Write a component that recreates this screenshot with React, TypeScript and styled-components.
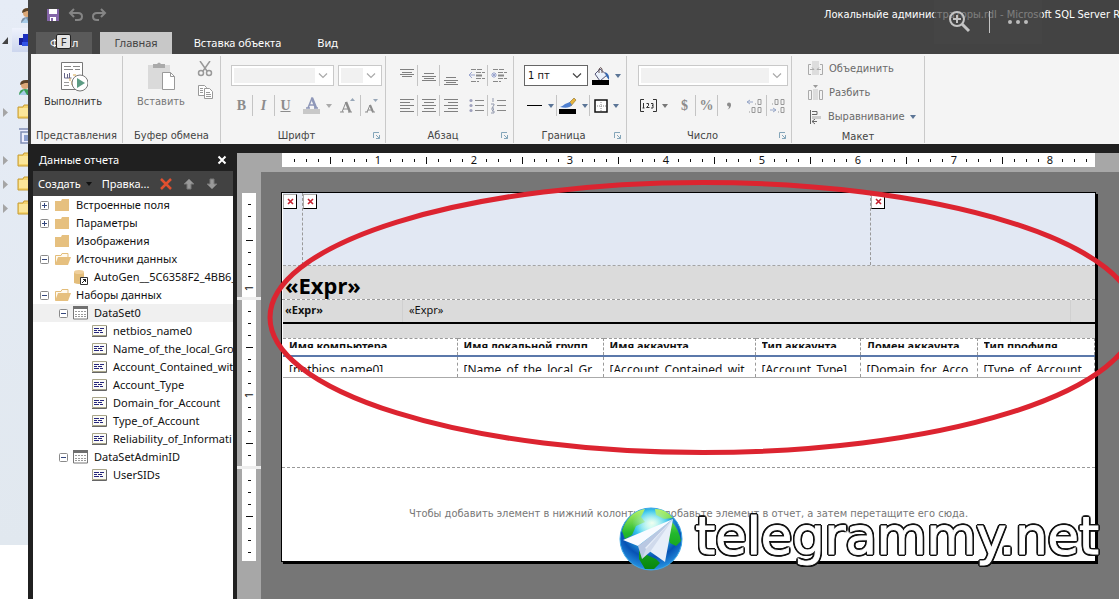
import React from "react";
import styled, { createGlobalStyle, css } from "styled-components";

const GlobalStyle = createGlobalStyle`
  * { box-sizing: border-box; }
  body {
    margin: 0;
    overflow: hidden;
    background: #fff;
    color: #111;
    font: 11px/18px "Noto Sans", "Open Sans", sans-serif;
  }
  button, select { font: inherit; color: inherit; }
  button { padding: 0; border: 0; background: none; }
`;

const narrowFont = `"DejaVu Sans Condensed", "DejaVu Sans", sans-serif`;

/* ---------- shell ---------- */

const Screen = styled.div`
  position: relative;
  display: flex;
  min-height: 100vh;
  overflow: hidden;
`;

const ConsoleTree = styled.aside`
  flex: none;
  width: 28px;
  height: 545px;
  padding-top: 4px;
  background: linear-gradient(#e6ecf6, #e1e8ef);
  overflow: hidden;
`;

const ConsoleRow = styled.div<{ $selected?: boolean }>`
  display: flex;
  align-items: center;
  gap: 8px;
  height: 24px;
  padding-left: 2px;
  svg { flex: none; }
  ${(p) =>
    p.$selected &&
    css`
      background: linear-gradient(#eef2fc, #ccd6ee) 12px 0 / 30px 24px no-repeat;
    `}
`;

const AppWindow = styled.div`
  display: flex;
  flex: 1;
  flex-direction: column;
  min-width: 0;
  background: #202020;
`;

/* ---------- title and tabs ---------- */

const TitleBar = styled.header`
  display: flex;
  align-items: center;
  justify-content: space-between;
  height: 30px;
  padding-left: 17px;
  background: #434343;
`;

const QuickAccess = styled.div`
  display: flex;
  gap: 7px;
  button { display: flex; }
`;

const Title = styled.h1`
  width: 295px;
  margin: 0;
  overflow: hidden;
  color: #fff;
  font: 400 11px/18px ${narrowFont};
  white-space: nowrap;
`;

const ViewerTools = styled.div`
  position: absolute;
  top: 0;
  right: 77px;
  display: flex;
  align-items: center;
  justify-content: space-between;
  width: 108px;
  height: 44px;
  padding: 0 13px;
  background: rgba(70, 70, 70, 0.7);
  button { display: flex; }
`;

const ViewerRule = styled.span`
  width: 1px;
  height: 22px;
  background: #c4c4c4;
`;

const TabBar = styled.nav`
  display: flex;
  gap: 8px;
  height: 24px;
  padding: 2px 8px 0;
  background: #434343;
`;

const Tab = styled.button<{ $kind?: "file" | "active" }>`
  position: relative;
  height: 22px;
  padding: 0 14px;
  color: ${(p) => (p.$kind === "active" ? "#444" : "#fff")};
  background: ${(p) => (p.$kind === "active" ? "#c8c8c8" : p.$kind === "file" ? "#5a5a5a" : "none")};
`;

const KeyTip = styled.kbd`
  position: absolute;
  top: 2px;
  left: 20px;
  width: 15px;
  height: 15px;
  border: 1px solid #222;
  border-radius: 2px;
  background: #e4e4e4;
  color: #333;
  font: 11px/13px "Noto Sans", sans-serif;
  text-align: center;
`;

/* ---------- ribbon ---------- */

const Ribbon = styled.div`
  display: flex;
  height: 90px;
  padding: 2px 0 1px;
  border-left: 3px solid #434343;
  background: #f4f4f4;
  font-family: ${narrowFont};
`;

const GroupBox = styled.section<{ $width: number }>`
  display: flex;
  flex: none;
  flex-direction: column;
  justify-content: space-between;
  width: ${(p) => p.$width}px;
  border-right: 1px solid #c9c9c9;
`;

const GroupBody = styled.div<{ $pad: number; $top: number }>`
  display: flex;
  flex-direction: column;
  gap: 9px;
  padding: ${(p) => p.$top}px 0 0 ${(p) => p.$pad}px;
`;

const GroupFooter = styled.div<{ $launch?: boolean }>`
  display: flex;
  align-items: center;
  height: 15px;
  padding: 0 ${(p) => (p.$launch ? 4 : 0)}px 0 0;
  color: #444;
  span { flex: 1; text-align: center; white-space: nowrap; }
  button { display: flex; opacity: 0.6; }
`;

const ToolRow = styled.div`
  display: flex;
  align-items: center;
  height: 21px;
`;

const Spacer = styled.span<{ $width: number }>`
  flex: none;
  width: ${(p) => p.$width}px;
`;

const Tool = styled.button<{ $width?: number; $divided?: boolean }>`
  display: flex;
  flex: none;
  align-items: center;
  justify-content: center;
  gap: 5px;
  width: ${(p) => p.$width ?? 22}px;
  height: 21px;
  border-right: 1px solid ${(p) => (p.$divided ? "#c4c4c4" : "transparent")};
  color: #8c8c8c;
  font: bold 14px/20px "Liberation Serif", serif;
`;

const ComboFrame = styled.label<{ $width: number; $live?: boolean }>`
  display: flex;
  flex: none;
  align-items: center;
  width: ${(p) => p.$width}px;
  height: 21px;
  padding: 2px;
  border: 1px solid ${(p) => (p.$live ? "#666" : "#c9c9c9")};
  background: #fff;
  select {
    flex: 1;
    min-width: 0;
    height: 15px;
    padding: 0 1px;
    border: 0;
    appearance: none;
    background: ${(p) => (p.$live ? "#fff" : "#f1f1f1")};
    color: #111;
    line-height: 15px;
    opacity: 1;
  }
  svg { flex: none; margin: 0 3px; }
`;

const BigTool = styled.button<{ $muted?: boolean }>`
  display: flex;
  flex-direction: column;
  align-items: center;
  color: ${(p) => (p.$muted ? "#777" : "#333")};
  line-height: 18px;
  svg { margin-bottom: 1px; }
`;

const ClipRow = styled.div`
  display: flex;
  padding-left: 14px;
  gap: 12px;
`;

const RunRow = styled.div`
  display: flex;
  justify-content: center;
  padding-right: 7px;
`;

const ClipColumn = styled.div`
  display: flex;
  flex-direction: column;
  gap: 7px;
  button { display: flex; }
`;

const LayoutList = styled.div`
  display: flex;
  flex-direction: column;
  padding: 1px 0 0 15px;
`;

const LayoutTool = styled.button`
  display: flex;
  align-items: center;
  gap: 5px;
  height: 24px;
  color: #6a6a6a;
`;

/* ---------- report data pane ---------- */

const Workspace = styled.main`
  display: flex;
  flex: 1;
  min-height: 0;
`;

const DataPane = styled.section`
  display: flex;
  flex: none;
  flex-direction: column;
  width: 209px;
  padding: 4px 4px 0 5px;
`;

const PaneHeader = styled.div`
  display: flex;
  align-items: center;
  justify-content: space-between;
  height: 23px;
  padding: 0 6px;
  color: #fff;
  h2 { margin: 0; font-size: 11px; font-weight: 400; }
  button { display: flex; }
`;

const PaneToolbar = styled.div`
  display: flex;
  align-items: center;
  gap: 10px;
  height: 25px;
  padding-left: 5px;
  background: #424242;
  color: #fff;
  button { display: flex; align-items: center; gap: 5px; }
`;

const Tree = styled.ul`
  flex: 1;
  margin: 0;
  padding: 0;
  overflow: hidden;
  background: #fff;
  list-style: none;
`;

const TreeRow = styled.li<{ $level: number; $selected?: boolean }>`
  display: flex;
  align-items: center;
  height: 18px;
  padding-left: ${(p) => 7 + p.$level * 19}px;
  background: ${(p) => (p.$selected ? "#f0f0f0" : "none")};
  white-space: nowrap;
  svg { flex: none; margin-right: 5px; }
`;

const Expander = styled.button`
  display: flex;
  flex: none;
  width: 14px;
  svg { margin: 1px 0 0; }
`;

/* ---------- report designer ---------- */

const Designer = styled.section`
  display: flex;
  flex: 1;
  flex-direction: column;
  min-width: 0;
  margin-top: 9px;
  background: #a7a7a7;
`;

const TopRuler = styled.div`
  display: flex;
  height: 14px;
  margin: 0 24px 5px 45px;
  padding-left: 6px;
  overflow: hidden;
  background: #fff;
`;

const Tick = styled.span<{ $long?: boolean; $vertical?: boolean }>`
  display: flex;
  flex: none;
  align-items: center;
  justify-content: center;
  width: ${(p) => (p.$vertical ? 14 : 12)}px;
  height: ${(p) => (p.$vertical ? 12 : 14)}px;
  line-height: 14px;
  writing-mode: ${(p) => (p.$vertical ? "sideways-lr" : "horizontal-tb")};
  i {
    width: ${(p) => (p.$vertical ? (p.$long ? 7 : 3) : 1)}px;
    height: ${(p) => (p.$vertical ? 1 : p.$long ? 7 : 3)}px;
    background: #111;
  }
`;

const DesignerBody = styled.div`
  display: flex;
  flex: 1;
`;

const SideRuler = styled.div`
  display: flex;
  flex: none;
  flex-direction: column;
  width: 24px;
  padding-top: 21px;
`;

const SideSection = styled.div<{ $height: number }>`
  height: ${(p) => p.$height}px;
  margin: 0 5px;
  padding-top: 5px;
  overflow: hidden;
  background: #fff;
`;

const SideDivider = styled.div`
  height: 3px;
  background: #eee;
`;

const Canvas = styled.div`
  flex: 1;
  min-width: 0;
  padding: 20px 23px 20px 20px;
  background: #767676;
`;

const Paper = styled.article`
  border: 1px solid #000;
  box-shadow: 2px 2px 0 #000;
  background: #fff;
`;

const ReportHeader = styled.div`
  height: 106px;
  padding-left: 1px;
`;

const ImageRow = styled.div`
  display: grid;
  grid-template-columns: 19px 1fr 225px;
  height: 73px;
  border-bottom: 1px dashed #a4a4a4;
  background: #e2e8f3;
`;

const ImageCell = styled.div`
  padding-top: 1px;
  & + & { border-left: 1px dashed #999; }
`;

const BrokenImage = styled.span`
  display: flex;
  align-items: center;
  justify-content: center;
  width: 14px;
  height: 15px;
  border: 1px solid #aaa;
  border-right-color: #000;
  border-bottom-color: #000;
  background: #fff;
`;

const ReportTitle = styled.h3`
  height: 33px;
  margin: 0;
  padding: 5px 2px 0;
  background: #dbdbdb;
  color: #000;
  font-size: 22px;
  line-height: 28px;
`;

const ReportBody = styled.div`
  height: 168px;
  padding-left: 1px;
  border-top: 1px dashed #999;
`;

const ExprRow = styled.div`
  display: grid;
  grid-template-columns: 119px 1fr 25px;
  height: 24px;
  border-bottom: 2px solid #000;
  background: #dbdbdb;
  line-height: 20px;
  b { padding-left: 2px; }
  span { padding-left: 6px; border-left: 1px solid #d0d0d0; }
`;

const BlankRow = styled.div`
  height: 14px;
  background: #dbdbdb;
`;

const ReportTable = styled.table`
  width: 100%;
  table-layout: fixed;
  border-collapse: collapse;
  th, td {
    padding: 0 6px;
    border: 0 dashed #999;
    border-width: 1px 1px 0 0;
    text-align: left;
    vertical-align: top;
    white-space: nowrap;
  }
  th { height: 17px; border-bottom: 2px solid #5b78aa; }
  td { height: 22px; border-bottom: 1px solid #aaa; }
`;

const CellText = styled.div<{ $data?: boolean }>`
  height: ${(p) => (p.$data ? 15 : 9)}px;
  padding-top: ${(p) => (p.$data ? 5 : 0)}px;
  overflow: hidden;
  font-size: ${(p) => (p.$data ? 12 : 11)}px;
  line-height: ${(p) => (p.$data ? 15 : 13)}px;
`;

const ReportFooter = styled.footer`
  height: 94px;
  padding-top: 37px;
  border-top: 1px dashed #999;
  color: #777;
  font-family: ${narrowFont};
  text-align: center;
  white-space: nowrap;
`;

const Annotation = styled.svg`
  position: absolute;
  top: 0;
  left: 0;
  pointer-events: none;
`;

const Watermark = styled.div`
  position: absolute;
  top: 507px;
  right: 20px;
  display: flex;
  align-items: flex-start;
  gap: 12px;
  color: #fff;
  font: 51px/60px "DejaVu Sans", sans-serif;
  -webkit-text-stroke: 1px #fff;
  text-shadow:
    2px 0 #111, -2px 0 #111, 0 2px #111, 0 -2px #111,
    2px 1px #111, -2px 1px #111, 2px -1px #111, -2px -1px #111,
    1px 2px #111, -1px 2px #111, 1px -2px #111, -1px -2px #111;
`;

/* ---------- icons ---------- */

const Caret = ({ color = "#5b7596" }: { color?: string }) => (
  <svg width="6" height="4"><path d="M0 0h6L3 4z" fill={color} /></svg>
);

const Chevron = ({ color }: { color: string }) => (
  <svg width="10" height="6"><path d="M1 .5l4 4 4-4" fill="none" stroke={color} strokeWidth="1.2" /></svg>
);

const Lines = ({ rows, color = "#808080" }: { rows: [number, number, number][]; color?: string }) => (
  <svg width="16" height="18" shapeRendering="crispEdges">
    {rows.map(([x, y, w], i) => <rect key={i} x={x} y={y} width={w} height="1" fill={color} />)}
  </svg>
);

const Indent = ({ back }: { back?: boolean }) => (
  <svg width="18" height="16">
    <path d="M3 1.500h12M8 4.500h9M8 10.500h9M3 13.500h8" stroke="#888" strokeDasharray="5 1" />
    <path d="M8 7.500h6" stroke="#888" strokeWidth="2" />
    <path d={back ? "M1 7h6M4 4v6M2 5l4 4M6 5l-4 4" : "M1 7h6M4 4L1 7l3 3"} stroke="#9aa5cf" fill="none" />
  </svg>
);

const ListIcon = ({ numbered }: { numbered?: boolean }) => (
  <svg width="16" height="16">
    <path d="M6 2.500h9M6 7.500h9M6 12.500h9" stroke="#888" />
    {numbered
      ? <path d="M2 0v4M0 6h3v1L1 10h2M0 11h3L1 13h2v2H0" fill="none" stroke="#9299ad" />
      : [2.5, 7.5, 12.5].map((y) => <circle key={y} cx="2" cy={y} r="1.600" fill="#9fa2bd" />)}
  </svg>
);

const Launcher = () => (
  <svg width="9" height="9" fill="none" stroke="#3b7292">
    <path d="M1.500 7V1.500H7" /><path d="M4 4l3.500 3.500M7.500 4v3.500H4" />
  </svg>
);

const FolderIcon = ({ open }: { open?: boolean }) => (
  <svg width="17" height="14">
    {open ? (
      <>
        <path d="M1.500 12V3.500H7l1-2h6V5" fill="#fffaf0" stroke="#e3bd7a" />
        <path d="M4 5h13l-3 8H1z" fill="#e6c07f" />
      </>
    ) : (
      <path d="M1 3h6l1-2h7v12H1z" fill="#e6c07f" />
    )}
  </svg>
);

const DatabaseIcon = () => (
  <svg width="16" height="17">
    <path d="M1 3v11q5 2 10 0V3" fill="#e3bd7a" />
    <ellipse cx="6" cy="3" rx="5" ry="2" fill="#efcf9b" />
    <path d="M7.500 8.500h7v7h-7z" fill="#fff" stroke="#333" />
    <path d="M9 14l4-4M10 10.500h2.500V13" fill="none" stroke="#222" />
  </svg>
);

const DataSetIcon = () => (
  <svg width="16" height="14">
    <path d="M.5 1h14v12H.5z" fill="#fff" stroke="#777" />
    <path d="M0 0h15v3H0z" fill="#707070" />
    <path d="M2 5.500h11M2 8.500h11M2 10.500h11" stroke="#999" strokeDasharray="2 1" />
  </svg>
);

const FieldIcon = () => (
  <svg width="16" height="12">
    <path d="M.5.5h14v10H.5z" fill="#fbfbf6" stroke="#a9a58a" />
    <path d="M14.500 1v10.500H0" fill="none" stroke="#666" />
    <path d="M2 3.500h5M8 3.500h4M2 5.500h3M6 5.500h4M2 7.500h5M8 7.500h3" stroke="#26267c" />
  </svg>
);

const BoxToggle = ({ open }: { open?: boolean }) => (
  <svg width="9" height="9">
    <rect x=".5" y=".5" width="8" height="8" rx="1" fill="#fff" stroke="#8a8a8a" />
    <path d={open ? "M2 4.500h5" : "M2 4.500h5M4.500 2v5"} stroke="#34477d" />
  </svg>
);

const RedCross = () => (
  <svg width="7" height="7"><path d="M1 1l5 5M6 1L1 6" stroke="#c3202f" strokeWidth="1.600" /></svg>
);

const ArrowIcon = ({ down }: { down?: boolean }) => (
  <svg width="13" height="12">
    <path d={down ? "M6 11l5-5H8V1H4v5H1z" : "M6 1l5 5H8v5H4V6H1z"} fill="#999" stroke="#777" />
  </svg>
);

const SideFolder = () => (
  <svg width="18" height="16">
    <path d="M2 3h5l1-2h10v11l-3 2H2z" fill="#f4d36d" stroke="#c79c32" />
    <path d="M3 4h13v8H3z" fill="#fbe69a" />
  </svg>
);

const SideArrow = () => <svg width="6" height="9"><path d="M1 0l5 4.500L1 9z" fill="#a5a5a5" /></svg>;

const PersonIcon = ({ badge }: { badge?: boolean }) => (
  <svg width="16" height="18">
    <path d="M1 16q0-6 6-6t8 6z" fill={badge ? "#3b9f57" : "#7b8fa5"} />
    <circle cx="7" cy="6" r="4" fill="#dba878" />
    <path d="M2 6q0-5 6-5t4 3L7 4z" fill="#5c4327" />
    <path d="M1 16l5-5 3 5z" fill="#a6cbe8" />
  </svg>
);

const Globe = () => (
  <svg width="64" height="64" viewBox="0 0 64 64">
    <defs>
      <radialGradient id="sea" cx="50%" cy="30%" r="70%">
        <stop offset="0" stopColor="#d6fff7" />
        <stop offset=".35" stopColor="#35c4ee" />
        <stop offset=".7" stopColor="#0752b4" />
        <stop offset="1" stopColor="#2795e3" />
      </radialGradient>
      <linearGradient id="land" x1="0" y1="0" x2="0" y2="1">
        <stop offset="0" stopColor="#baf36a" />
        <stop offset=".4" stopColor="#23b92d" />
        <stop offset="1" stopColor="#08860d" />
      </linearGradient>
      <radialGradient id="glow" cx="50%" cy="50%" r="50%">
        <stop offset="0" stopColor="#f2fff0" />
        <stop offset="1" stopColor="#9af2f0" stopOpacity="0" />
      </radialGradient>
    </defs>
    <circle cx="32" cy="32" r="31" fill="url(#sea)" stroke="#3ba8e6" />
    <path d="M3 24Q9 5 26 2l-4 8 4 5-9 4-4 9-7 4zM36 2q11 0 18 9l-9 1-8-4zM52 14q8 8 10 20l-5 5-6-3-2-8zM20 43l8 5 9 4 4 4-6 6h-9l-6-10z" fill="url(#land)" />
    <ellipse cx="33" cy="16" rx="20" ry="14" fill="url(#glow)" />
    <path d="M54 12L4 33l15 6z" fill="#f9fbff" />
    <path d="M54 12L19 39l4 13 6-9z" fill="#b9c8e2" />
    <path d="M54 12L26 41l20 14z" fill="#e7eef9" />
    <path d="M54 12L27 42l-4 10 8-7z" fill="#d0daec" />
  </svg>
);

/* ---------- data ---------- */

type Node = {
  text: string;
  icon: React.ReactNode;
  level: number;
  toggle?: "open" | "closed" | "blank";
  selected?: boolean;
};

const nodes: Node[] = [
  { text: "Встроенные поля", icon: <FolderIcon />, level: 0, toggle: "closed" },
  { text: "Параметры", icon: <FolderIcon />, level: 0, toggle: "closed" },
  { text: "Изображения", icon: <FolderIcon />, level: 0, toggle: "blank" },
  { text: "Источники данных", icon: <FolderIcon open />, level: 0, toggle: "open" },
  { text: "AutoGen__5C6358F2_4BB6_", icon: <DatabaseIcon />, level: 1, toggle: "blank" },
  { text: "Наборы данных", icon: <FolderIcon open />, level: 0, toggle: "open" },
  { text: "DataSet0", icon: <DataSetIcon />, level: 1, toggle: "open", selected: true },
  ...[
    "netbios_name0",
    "Name_of_the_local_Gro",
    "Account_Contained_wit",
    "Account_Type",
    "Domain_for_Account",
    "Type_of_Account",
    "Reliability_of_Informati",
  ].map((text): Node => ({ text, icon: <FieldIcon />, level: 2, toggle: "blank" })),
  { text: "DataSetAdminID", icon: <DataSetIcon />, level: 1, toggle: "open" },
  { text: "UserSIDs", icon: <FieldIcon />, level: 2, toggle: "blank" },
];

const columns: { head: string; field: string; width?: number }[] = [
  { head: "Имя компьютера", field: "[netbios_name0]", width: 174 },
  { head: "Имя локальной групп", field: "[Name_of_the_local_Gr", width: 146 },
  { head: "Имя аккаунта", field: "[Account_Contained_wit", width: 152 },
  { head: "Тип аккаунта", field: "[Account_Type]", width: 105 },
  { head: "Домен аккаунта", field: "[Domain_for_Acco", width: 117 },
  { head: "Тип профиля", field: "[Type_of_Account" },
];

/* ---------- pieces ---------- */

const Group = ({ title, width, pad = 0, top = 9, launch, children }: {
  title: string; width: number; pad?: number; top?: number; launch?: boolean; children: React.ReactNode;
}) => (
  <GroupBox $width={width} aria-label={title}>
    <GroupBody $pad={pad} $top={top}>{children}</GroupBody>
    <GroupFooter $launch={launch}>
      <span>{title}</span>
      {launch && <button aria-label={title + ": параметры"}><Launcher /></button>}
    </GroupFooter>
  </GroupBox>
);

const Combo = ({ label, width, value }: { label: string; width: number; value?: string }) => (
  <ComboFrame $width={width} $live={!!value}>
    <select aria-label={label} disabled={!value}>{value && <option>{value}</option>}</select>
    <Chevron color={value ? "#444" : "#aaa"} />
  </ComboFrame>
);

const ticks = (count: number, vertical?: boolean) =>
  Array.from({ length: count }, (_, k) => {
    const n = k + 1;
    return (
      <Tick key={n} $long={n % 8 === 4} $vertical={vertical}>
        {n % 8 === 0 ? n / 8 : <i />}
      </Tick>
    );
  });

const left: [number, number, number][] = [[1, 2, 14], [1, 5, 10], [1, 8, 14], [1, 11, 10], [1, 14, 14]];

export default function App() {
  return (
    <Screen>
      <GlobalStyle />
      <ConsoleTree>
        <ConsoleRow><Spacer $width={10} /><PersonIcon /></ConsoleRow>
        <ConsoleRow $selected>
          <svg width="6" height="7"><path d="M6 0v7H0z" fill="#444" /></svg>
          <svg width="18" height="16"><path d="M7 2h8v7H7zM5 8h9v5H5z" fill="#1b2fc0" /><path d="M3 6h4v7H3z" fill="#16209c" /><path d="M6 10h7v4H6z" fill="#3153e6" /></svg>
        </ConsoleRow>
        <ConsoleRow />
        <ConsoleRow><Spacer $width={8} /><PersonIcon badge /></ConsoleRow>
        <ConsoleRow><SideArrow /><SideFolder /></ConsoleRow>
        <ConsoleRow>
          <Spacer $width={8} />
          <svg width="14" height="16"><path d="M1 1h13v3H3v11h11" fill="#eef" stroke="#7f8db5" strokeWidth="1.500" /><path d="M6 7h8v6H6z" fill="#8c9fce" /></svg>
        </ConsoleRow>
        <ConsoleRow><SideArrow /><SideFolder /></ConsoleRow>
        <ConsoleRow><SideArrow /><SideFolder /></ConsoleRow>
        <ConsoleRow><SideArrow /><SideFolder /></ConsoleRow>
      </ConsoleTree>

      <AppWindow>
        <TitleBar>
          <QuickAccess>
            <button aria-label="Сохранить">
              <svg width="16" height="14"><path d="M2 1h12v12H2z" fill="#8465a8" /><path d="M4 1h8v5H4zM5 9h6v4H5z" fill="#fff" /><path d="M6 10h2v3H6z" fill="#8465a8" /></svg>
            </button>
            <button aria-label="Отменить">
              <svg width="16" height="14" fill="none" stroke="#858585" strokeWidth="2"><path d="M6 1L2 5l4 4M2 5h8q4 0 4 3.500T10 12H7" /></svg>
            </button>
            <button aria-label="Повторить">
              <svg width="16" height="14" fill="none" stroke="#858585" strokeWidth="2"><path d="M10 1l4 4-4 4M14 5H6Q2 5 2 8.500T6 12h2" /></svg>
            </button>
          </QuickAccess>
          <Title>Локальныйе администраторы.rdl - Microsoft SQL Server R</Title>
        </TitleBar>
        <TabBar>
          <Tab $kind="file">Файл<KeyTip>F</KeyTip></Tab>
          <Tab $kind="active">Главная</Tab>
          <Tab>Вставка объекта</Tab>
          <Tab>Вид</Tab>
        </TabBar>

        <Ribbon>
          <Group title="Представления" width={92} top={5}>
            <RunRow>
              <BigTool>
                <svg width="30" height="31" fill="none">
                  <path d="M3.500 1.500h21v27h-21z" fill="#fff" stroke="#777" />
                  <path d="M6 5.500h7M15 5.500h7M6 8.500h9M17 8.500h5" stroke="#888" />
                  <path d="M6.500 12v5h7M9.500 17v-4M11.500 17v-5" stroke="#668" />
                  <path d="M15 14h3M14 20v4M12 17v3" stroke="#d9a84b" />
                  <path d="M6 21.500h5M6 24.500h5" stroke="#999" />
                  <circle cx="22" cy="22" r="8" fill="#fff" stroke="#777" />
                  <path d="M19 17l8 5-8 5z" fill="#5d9c84" />
                </svg>
                Выполнить
              </BigTool>
            </RunRow>
          </Group>

          <Group title="Буфер обмена" width={98} top={5}>
            <ClipRow>
              <BigTool $muted>
                <svg width="30" height="31">
                  <path d="M2 4h22v24H2z" fill="#dadada" />
                  <path d="M7 7V3h4q2-3 4 0h4v4z" fill="#aaa" />
                  <path d="M16.500 11.500h8l4 4v13h-12z" fill="#fff" stroke="#999" />
                  <path d="M24.500 11.500v4h4" fill="none" stroke="#999" />
                </svg>
                Вставить
              </BigTool>
              <ClipColumn>
                <button aria-label="Вырезать">
                  <svg width="16" height="16" fill="none" stroke="#999" strokeWidth="1.500"><path d="M3 0l7 10M13 0L6 10" /><circle cx="4" cy="12" r="2.500" /><circle cx="12" cy="12" r="2.500" /></svg>
                </button>
                <button aria-label="Копировать">
                  <svg width="16" height="16" fill="#fff" stroke="#999"><path d="M1.500 1.500h6l2 2v8h-8z" /><path d="M7.500 4.500h5l3 3v7h-8z" /><path d="M3 4.500h3M3 6.500h3M3 8.500h3M9 8.500h4M9 10.500h5M9 12.500h5" /></svg>
                </button>
              </ClipColumn>
            </ClipRow>
          </Group>

          <Group title="Шрифт" width={165} pad={10} launch>
            <ToolRow>
              <Combo label="Шрифт" width={103} />
              <Spacer $width={4} />
              <Combo label="Размер" width={44} />
            </ToolRow>
            <ToolRow>
              <Tool $divided aria-label="Полужирный">B</Tool>
              <Tool $divided aria-label="Курсив"><em>I</em></Tool>
              <Tool aria-label="Подчеркнутый"><u>U</u></Tool>
              <Spacer $width={4} />
              <Tool $width={34} aria-label="Цвет текста">
                <svg width="18" height="17"><path d="M5 11L9 1l4 10M6.500 8h5M3 11h4M11 11h4" stroke="#8e97b8" strokeWidth="1.500" fill="none" /><path d="M9 1l4 10" stroke="#8e97b8" strokeWidth="2.500" /><path d="M0 12h17v5H0z" fill="#c8c8c8" /></svg>
                <Caret color="#aaa" />
              </Tool>
              <Spacer $width={1} />
              <Tool $width={25} $divided aria-label="Увеличить">
                <svg width="16" height="15"><path d="M2 14L6 4l4 10M3 11h6M0 14h4M8 14h4" stroke="#8c8c8c" fill="none" /><path d="M6 4l4 10" stroke="#8c8c8c" strokeWidth="2.500" /><path d="M10 3h5l-2.500-3z" fill="#98a7b8" /></svg>
              </Tool>
              <Tool aria-label="Уменьшить">
                <svg width="14" height="15"><path d="M2 14l3-7 3 7M3 12h5M0 14h3M7 14h3" stroke="#8c8c8c" fill="none" /><path d="M5 7l3 7" stroke="#8c8c8c" strokeWidth="2" /><path d="M8 1h5l-2.500 3z" fill="#98a7b8" /></svg>
              </Tool>
            </ToolRow>
          </Group>

          <Group title="Абзац" width={128} pad={10} launch>
            <ToolRow>
              <Tool $divided aria-label="По верхнему краю"><Lines rows={[[1, 2, 14], [3, 5, 10], [1, 7, 14], [3, 9, 10]].map(([x, y, w]) => [x, y, w] as [number, number, number])} /></Tool>
              <Tool $divided aria-label="По середине"><Lines rows={[[3, 6, 10], [1, 9, 14], [3, 11, 10], [1, 13, 14]]} /></Tool>
              <Tool aria-label="По нижнему краю"><Lines rows={[[3, 10, 10], [1, 13, 14], [3, 15, 10], [1, 17, 14]]} /></Tool>
              <Spacer $width={4} />
              <Tool $divided aria-label="Уменьшить отступ"><Indent /></Tool>
              <Tool aria-label="Увеличить отступ"><Indent back /></Tool>
            </ToolRow>
            <ToolRow>
              <Tool $divided aria-label="По левому краю"><Lines rows={left} /></Tool>
              <Tool $divided aria-label="По центру"><Lines rows={left.map(([x, y, w]) => [w === 14 ? 1 : 3, y, w])} /></Tool>
              <Tool aria-label="По правому краю"><Lines rows={left.map(([x, y, w]) => [15 - w, y, w])} /></Tool>
              <Spacer $width={4} />
              <Tool $divided aria-label="Маркеры"><ListIcon /></Tool>
              <Tool aria-label="Нумерация"><ListIcon numbered /></Tool>
            </ToolRow>
          </Group>

          <Group title="Граница" width={113} pad={10} launch>
            <ToolRow>
              <Combo label="Толщина" width={64} value="1 пт" />
              <Spacer $width={3} />
              <Tool $width={31} aria-label="Заливка">
                <svg width="18" height="18"><path d="M3 7l5-5 7 6-7 6z" fill="#eaf1fb" stroke="#557" /><path d="M7 6V2q2-3 3 0v4" fill="none" stroke="#655" /><path d="M13 5q5 2 4 8l-3-4z" fill="#3567b0" /><path d="M0 13h17v5H0z" fill="#000" /></svg>
                <Caret />
              </Tool>
            </ToolRow>
            <ToolRow>
              <Tool $width={33} $divided aria-label="Стиль линии">
                <svg width="16" height="2"><path d="M0 0h15v1H0z" fill="#000" /></svg>
                <Caret />
              </Tool>
              <Tool $width={33} $divided aria-label="Цвет линии">
                <svg width="18" height="18"><path d="M10 6l5-5 2 2-5 6z" fill="#e7b53d" stroke="#866b2c" strokeWidth=".6" /><path d="M1 10q3-1 5-3l5-2 2 3q-3 4-12 2z" fill="#4f80d0" /><path d="M0 12h17v5H0z" fill="#000" /></svg>
                <Caret />
              </Tool>
              <Tool $width={33} aria-label="Границы">
                <svg width="14" height="14" fill="none"><path d="M1 1h12v12H1z" fill="#fff" stroke="#111" strokeWidth="1.500" /><path d="M7 3v9M3 7h9" stroke="#888" strokeDasharray="1 1" /></svg>
                <Caret />
              </Tool>
            </ToolRow>
          </Group>

          <Group title="Число" width={165} pad={11} launch>
            <ToolRow><Combo label="Числовой формат" width={150} /></ToolRow>
            <ToolRow>
              <Tool $width={32} aria-label="Формат">
                <svg width="17" height="13" fill="none" stroke="#333"><path d="M4 .5H.5v12H4M13 .5h3.500v12H13" /><path d="M3.500 4v5M2.500 9h2M6.500 4.500h2v2l-2 2h3M11 4.500h2v2h-1 1V9h-2" /></svg>
                <Caret color="#777" />
              </Tool>
              <Spacer $width={4} />
              <Tool $divided aria-label="Валюта">$</Tool>
              <Tool $divided aria-label="Процент">%</Tool>
              <Tool aria-label="Разделитель">
                <svg width="6" height="8"><circle cx="3" cy="2.500" r="2" fill="#8c8c8c" /><path d="M5 2.500q0 4-3.500 5 2-2 1.500-4z" fill="#8c8c8c" /></svg>
              </Tool>
              <Spacer $width={3} />
              <Tool $width={24} $divided aria-label="Увеличить разрядность">
                <svg width="17" height="16" fill="none" stroke="#999"><path d="M7 4H1l3-2M1 4l3 2" stroke="#98a7c8" /><path d="M9 6h1M12 1.500h3v5h-3zM3 14h1M6 9.500h3v5H6zM12 9.500h3v5h-3z" /></svg>
              </Tool>
              <Tool aria-label="Уменьшить разрядность">
                <svg width="17" height="16" fill="none" stroke="#999"><path d="M1 12h6l-3-2M7 12l-3 2" stroke="#98a7c8" /><path d="M3 6h1M6 1.500h3v5H6zM12 1.500h3v5h-3zM9 14h1M12 9.500h3v5h-3z" /></svg>
              </Tool>
            </ToolRow>
          </Group>

          <GroupBox $width={133}>
            <LayoutList>
              <LayoutTool>
                <svg width="17" height="16" fill="none" stroke="#aaa"><path d="M5 0h7v14H5z" fill="#ddd" stroke="none" /><path d="M4 3.500H1.500v10H4M13 3.500h2.500v10H13M3 8.500h4l-2-2M14 8.500h-4l2-2" /></svg>
                Объединить
              </LayoutTool>
              <LayoutTool>
                <svg width="17" height="16" fill="none" stroke="#aaa"><path d="M6 4h5v11H6z" fill="#ddd" stroke="none" /><path d="M1.500 5.500h3v9h-3zM12.500 5.500h3v9h-3z" /><path d="M6 0h5L8.500 3z" fill="#999" stroke="none" /></svg>
                Разбить
              </LayoutTool>
              <LayoutTool>
                <svg width="16" height="16" fill="none" stroke="#666"><path d="M3.500 1v14M5 2.500h5v3H5M10 12.500H5M8 10l-3 2.500L8 15" /><path d="M5 7h9v3H5z" fill="#ccc" stroke="none" /></svg>
                Выравнивание
                <Caret />
              </LayoutTool>
            </LayoutList>
            <GroupFooter><span>Макет</span></GroupFooter>
          </GroupBox>
        </Ribbon>

        <Workspace>
          <DataPane>
            <PaneHeader>
              <h2>Данные отчета</h2>
              <button aria-label="Закрыть">
                <svg width="10" height="10"><path d="M1.500 1.500l7 7M8.500 1.500l-7 7" stroke="#fff" strokeWidth="2" /></svg>
              </button>
            </PaneHeader>
            <PaneToolbar>
              <button>Создать <Caret color="#111" /></button>
              <button>Правка...</button>
              <button aria-label="Удалить">
                <svg width="14" height="14"><path d="M2 2l10 10M12 2L2 12" stroke="#e2502f" strokeWidth="2.500" /></svg>
              </button>
              <button aria-label="Вверх"><ArrowIcon /></button>
              <button aria-label="Вниз"><ArrowIcon down /></button>
            </PaneToolbar>
            <Tree>
              {nodes.map((n) => (
                <TreeRow key={n.text} $level={n.level} $selected={n.selected}>
                  {n.toggle === "blank" ? (
                    <Spacer $width={14} />
                  ) : (
                    <Expander aria-label={n.text}><BoxToggle open={n.toggle === "open"} /></Expander>
                  )}
                  {n.icon}
                  {n.text}
                </TreeRow>
              ))}
            </Tree>
          </DataPane>

          <Designer>
            <TopRuler>{ticks(67)}</TopRuler>
            <DesignerBody>
              <SideRuler>
                <SideSection $height={104}>{ticks(8, true)}</SideSection>
                <SideDivider />
                <SideSection $height={166}>{ticks(13, true)}</SideSection>
                <SideDivider />
                <SideSection $height={92}>{ticks(7, true)}</SideSection>
              </SideRuler>
              <Canvas>
                <Paper>
                  <ReportHeader>
                    <ImageRow>
                      {[0, 1, 2].map((k) => (
                        <ImageCell key={k}><BrokenImage><RedCross /></BrokenImage></ImageCell>
                      ))}
                    </ImageRow>
                    <ReportTitle>«Expr»</ReportTitle>
                  </ReportHeader>
                  <ReportBody>
                    <ExprRow><b>«Expr»</b><span>«Expr»</span><span /></ExprRow>
                    <BlankRow />
                    <ReportTable>
                      <colgroup>{columns.map((c) => <col key={c.head} width={c.width} />)}</colgroup>
                      <thead>
                        <tr>{columns.map((c) => <th key={c.head}><CellText>{c.head}</CellText></th>)}</tr>
                      </thead>
                      <tbody>
                        <tr>{columns.map((c) => <td key={c.field}><CellText $data>{c.field}</CellText></td>)}</tr>
                      </tbody>
                    </ReportTable>
                  </ReportBody>
                  <ReportFooter>
                    Чтобы добавить элемент в нижний колонтитул, добавьте элемент в отчет, а затем перетащите его сюда.
                  </ReportFooter>
                </Paper>
              </Canvas>
            </DesignerBody>
          </Designer>
        </Workspace>
      </AppWindow>

      <ViewerTools>
        <button aria-label="Увеличить">
          <svg width="24" height="24" fill="none" stroke="#c4c4c4" strokeWidth="2"><circle cx="10" cy="9" r="7" /><path d="M10 5v8M6 9h8" /><path d="M15 14l7 7" strokeWidth="3" /></svg>
        </button>
        <ViewerRule />
        <button aria-label="Ещё">
          <svg width="22" height="4" fill="#bbb"><circle cx="3" cy="2" r="2" /><circle cx="11" cy="2" r="2" /><circle cx="19" cy="2" r="2" /></svg>
        </button>
      </ViewerTools>

      <Annotation width="1140" height="460">
        <ellipse cx="703" cy="317.500" rx="433" ry="135" fill="none" stroke="#dc2430" strokeWidth="5" />
      </Annotation>
      <Watermark><Globe />telegrammy.net</Watermark>
    </Screen>
  );
}
